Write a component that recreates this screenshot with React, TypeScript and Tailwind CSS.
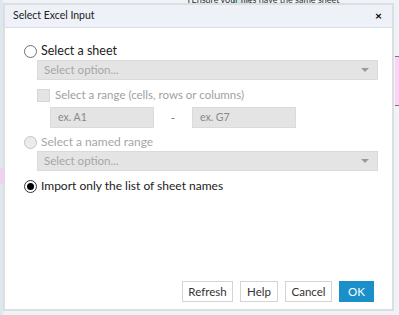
import React from "react";

function Radio({ checked, disabled }: { checked?: boolean; disabled?: boolean }) {
  return (
    <span
      className={`w-[13px] h-[13px] rounded-full border flex items-center justify-center shrink-0 ${
        disabled ? "border-[#c4c4c4] bg-[#ececec]" : checked ? "border-[#333] bg-white" : "border-[#707070] bg-white"
      }`}
    >
      {checked && <span className="w-[7px] h-[7px] rounded-full bg-black" />}
    </span>
  );
}

function SelectBox() {
  return (
    <div className="h-[20px] bg-[#e4e4e4] border border-[#dadada] flex items-center justify-between pl-[6px] pr-[8px]">
      <span className="text-[11.5px] text-[#a6a6a6]">Select option...</span>
      <span className="w-0 h-0 border-l-[4px] border-r-[4px] border-t-[4px] border-l-transparent border-r-transparent border-t-[#9a9a9a]" />
    </div>
  );
}

function Btn({ label, w, primary }: { label: string; w: string; primary?: boolean }) {
  return (
    <button
      className={`h-[21px] ${w} text-[11.5px] border flex items-center justify-center ${
        primary ? "bg-[#1b8fca] border-[#1b8fca] text-white" : "bg-white border-[#d4d4d4] text-[#333]"
      }`}
    >
      {label}
    </button>
  );
}

export default function App() {
  return (
    <div
      className="relative w-[399px] h-[315px] bg-[#eef3fa] overflow-hidden"
      style={{ fontFamily: 'Lato, "Open Sans", sans-serif' }}
    >
      {/* background app bits */}
      <div className="absolute left-[233px] top-0 w-[18px] h-[4px] bg-[#cfe8e6] border-x border-[#8aa]" />
      <div className="absolute left-[186px] top-[-5px] text-[9px] leading-[9px] text-[#333] whitespace-nowrap">
        YEnsure your files have the same sheet
      </div>
      <div className="absolute left-0 top-0 w-[3px] h-[315px] bg-[#dbe9ef]" />
      <div className="absolute left-0 top-[168px] w-[3px] h-[16px] bg-[#f7cdf5]" />
      <div className="absolute left-[395px] top-[56px] w-[4px] h-[50px] bg-[#fbd3fb] border-y border-[#8a6a8a]" />

      {/* dialog */}
      <div className="absolute left-[3px] top-[3px] w-[391px] h-[308px] bg-white border-2 border-[#dedede] flex flex-col">
        <div className="h-[23px] bg-[#eef2f8] border-b border-[#d8dde6] flex items-center justify-between pl-[8px] pr-[10px] shrink-0">
          <span className="text-[10.5px] text-[#222]">Select Excel Input</span>
          <span className="text-[12px] font-bold text-black leading-none">×</span>
        </div>
        <div className="flex-1 flex flex-col pl-[32px] pr-[14px] pt-[15px] text-[12px] text-[#222]">
          <label className="flex items-center gap-[4px] -ml-[13px] h-[16px] text-[12.5px]">
            <Radio />
            <span>Select a sheet</span>
          </label>
          <div className="mt-[1px]">
            <SelectBox />
          </div>
          <label className="flex items-center gap-[5px] mt-[8px] h-[14px] text-[#a0a0a0] text-[11.5px]">
            <span className="w-[13px] h-[13px] bg-[#e4e4e4] border border-[#d6d6d6]" />
            <span>Select a range (cells, rows or columns)</span>
          </label>
          <div className="flex items-center mt-[5px] ml-[13px]">
            <div className="w-[104px] h-[21px] bg-[#e4e4e4] border border-[#dadada] flex items-center pl-[7px] text-[10.5px] text-[#888]">
              ex. A1
            </div>
            <span className="w-[38px] text-center text-[#777] text-[12px]">-</span>
            <div className="w-[104px] h-[21px] bg-[#e4e4e4] border border-[#dadada] flex items-center pl-[7px] text-[10.5px] text-[#888]">
              ex. G7
            </div>
          </div>
          <label className="flex items-center gap-[4px] -ml-[13px] mt-[6px] h-[16px] text-[#a6a6a6]">
            <Radio disabled />
            <span>Select a named range</span>
          </label>
          <div className="mt-[1px]">
            <SelectBox />
          </div>
          <label className="flex items-center gap-[4px] -ml-[13px] mt-[7px] h-[16px]">
            <Radio checked />
            <span>Import only the list of sheet names</span>
          </label>
          <div className="flex-1" />
          <div className="flex justify-end gap-[7px] pb-[7px] pr-[4px]">
            <Btn label="Refresh" w="w-[51px]" />
            <Btn label="Help" w="w-[38px]" />
            <Btn label="Cancel" w="w-[47px]" />
            <Btn label="OK" w="w-[35px]" primary />
          </div>
        </div>
      </div>
    </div>
  );
}
